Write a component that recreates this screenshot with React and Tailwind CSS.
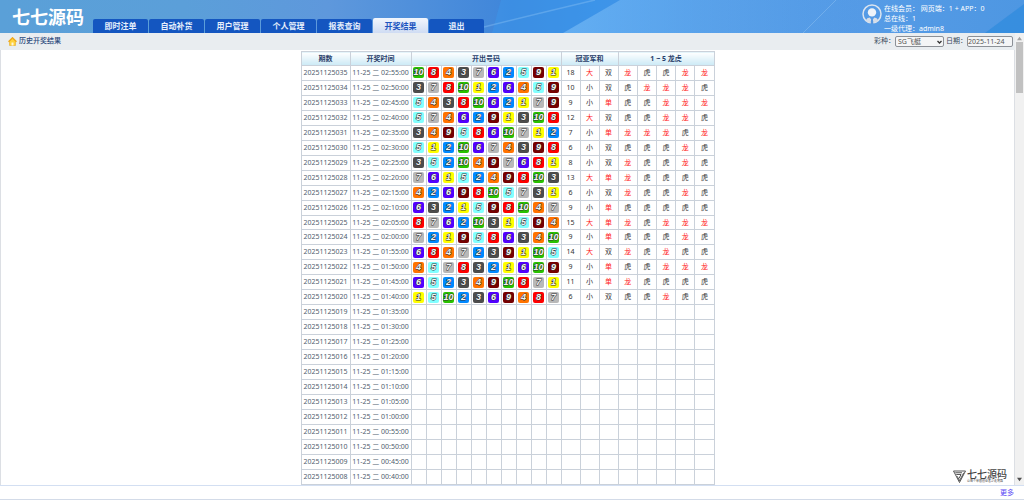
const FONT = "font-['Noto_Sans','Noto_Sans_CJK_SC',sans-serif]";

const TABS = ["即时注单", "自动补货", "用户管理", "个人管理", "报表查询", "开奖结果", "退出"];
const ACTIVE_TAB = "开奖结果";

const BALL_COLORS = {
  1: "bg-[#ffff00]",
  2: "bg-[#0089ff]",
  3: "bg-[#4d4d4d]",
  4: "bg-[#ff7300]",
  5: "bg-[#81ffff]",
  6: "bg-[#5200ff]",
  7: "bg-[#b8b8b8]",
  8: "bg-[#ff0000]",
  9: "bg-[#760000]",
  10: "bg-[#28c200]",
};

// newest draw first
const RESULTS = [
  [10, 8, 4, 3, 7, 6, 2, 5, 9, 1],
  [3, 7, 8, 10, 1, 2, 6, 4, 5, 9],
  [5, 4, 3, 8, 10, 6, 2, 1, 7, 9],
  [5, 7, 4, 6, 2, 9, 1, 3, 10, 8],
  [3, 4, 9, 5, 8, 6, 10, 7, 1, 2],
  [5, 1, 2, 10, 6, 7, 4, 3, 9, 8],
  [3, 5, 2, 10, 4, 9, 7, 6, 8, 1],
  [7, 6, 1, 5, 2, 4, 9, 8, 10, 3],
  [4, 2, 6, 9, 8, 10, 5, 7, 3, 1],
  [6, 3, 2, 1, 5, 9, 8, 10, 4, 7],
  [8, 7, 6, 2, 10, 3, 1, 5, 9, 4],
  [7, 2, 1, 9, 5, 8, 6, 3, 4, 10],
  [6, 8, 4, 7, 2, 3, 9, 1, 10, 5],
  [4, 5, 7, 8, 3, 2, 1, 6, 10, 9],
  [6, 5, 2, 3, 4, 9, 10, 8, 7, 1],
  [1, 5, 10, 2, 3, 6, 9, 4, 8, 7],
];

const pad = (n) => String(n).padStart(2, "0");

// draws run every five minutes, the first one listed is 02:55
const ROWS = Array.from({ length: 28 }, (_, i) => {
  const minutes = 175 - i * 5;
  return {
    id: 20251125035 - i,
    time: `11-25 二 ${pad(Math.floor(minutes / 60))}:${pad(minutes % 60)}:00`,
    balls: RESULTS[i],
  };
});

const Ball = ({ n }) => (
  <span
    className={`mx-auto flex h-[11px] w-[11px] items-center justify-center rounded-xs font-['Liberation_Sans',sans-serif] text-[9px] leading-none font-bold text-[#f4f4f4] italic [-webkit-text-stroke:1px_#333] [paint-order:stroke_fill] ${BALL_COLORS[n]}`}
  >
    {n}
  </span>
);

const Cell = ({ red, children }) => (
  <td className={`border border-[#cad1da] p-0 text-center ${red ? "text-[#ff2222]" : "text-[#333]"}`}>{children}</td>
);

const DrawRow = ({ row }) => {
  const { balls } = row;
  const sum = balls && balls[0] + balls[1];
  return (
    <tr className="h-[14px]">
      <td className="border border-[#cad1da] p-0 text-center">{row.id}</td>
      <td className="border border-[#cad1da] p-0 text-center whitespace-nowrap">{row.time}</td>
      {Array.from({ length: 10 }, (_, i) => (
        <Cell key={i}>{balls && <Ball n={balls[i]} />}</Cell>
      ))}
      <Cell>{sum}</Cell>
      <Cell red={sum > 11}>{balls && (sum > 11 ? "大" : "小")}</Cell>
      <Cell red={sum % 2 === 1}>{balls && (sum % 2 ? "单" : "双")}</Cell>
      {Array.from({ length: 5 }, (_, i) => {
        const dragon = balls && balls[i] > balls[9 - i];
        return (
          <Cell key={i} red={dragon}>
            {balls && (dragon ? "龙" : "虎")}
          </Cell>
        );
      })}
    </tr>
  );
};

const Th = ({ children, ...rest }) => (
  <th
    scope="col"
    className="border border-[#cad1da] bg-gradient-to-b from-white to-[#cbe9f5] p-0 text-center font-bold text-[#2a3f6b]"
    {...rest}
  >
    {children}
  </th>
);

const ResultsTable = () => (
  <table className="h-full w-[414px] table-fixed border-collapse text-[7px] leading-[10px] text-[#4f606e]">
    <colgroup>
      <col className="w-[49px]" />
      <col className="w-[61px]" />
      <col span={10} className="w-[15px]" />
      <col span={3} className="w-[19px]" />
      <col span={5} />
    </colgroup>
    <thead>
      <tr className="h-[14px]">
        <Th>期数</Th>
        <Th>开奖时间</Th>
        <Th colSpan={10}>开出号码</Th>
        <Th colSpan={3}>冠亚军和</Th>
        <Th colSpan={5}>1 ~ 5 龙虎</Th>
      </tr>
    </thead>
    <tbody>
      {ROWS.map((row) => (
        <DrawRow key={row.id} row={row} />
      ))}
    </tbody>
  </table>
);

const HeaderRays = () => (
  <svg className="absolute inset-0 h-full w-full" viewBox="0 0 1024 33" preserveAspectRatio="none" aria-hidden="true">
    <defs>
      <linearGradient id="ray" x1="0" x2="1" y1="0" y2="0">
        <stop offset="0" stopColor="#74bcf8" stopOpacity=".7" />
        <stop offset="1" stopColor="#74bcf8" stopOpacity="0" />
      </linearGradient>
    </defs>
    <path d="M501 0 L492 33 H563 L620 0Z" fill="#3a9cf0" opacity=".4" />
    <path d="M620 0 L563 33 H860 V0Z" fill="url(#ray)" />
    <path d="M484 27 Q540 13 595 0" fill="none" stroke="#8cc4f4" strokeWidth="1.5" opacity=".4" />
    <path d="M803 33 L836 0" fill="none" stroke="#9ccbf5" strokeWidth="1" opacity=".4" />
    <path d="M985 33 L1024 4 V33Z" fill="#1f86dc" opacity=".5" />
  </svg>
);

const UserIcon = () => (
  <svg className="h-5 w-5 shrink-0" viewBox="0 0 20 20" aria-hidden="true">
    <circle cx="10" cy="10" r="9" fill="none" stroke="#dbe4ef" strokeWidth="1.5" />
    <circle cx="10" cy="8.4" r="4.2" fill="#eef3f9" />
    <path d="M3.6 16.4 Q5 13.6 7.6 13.6 L9.2 15.6 L8.6 19 Q5.4 18.6 3.6 16.4Z" fill="#d5dde8" />
    <path d="M16.4 16.4 Q15 13.6 12.4 13.6 L10.8 15.6 L11.4 19 Q14.6 18.6 16.4 16.4Z" fill="#d5dde8" />
    <path d="M9.2 15.6 H10.8 L11.4 20 H8.6Z" fill="#5596e0" />
  </svg>
);

const HomeIcon = () => (
  <svg className="h-[9px] w-[9px]" viewBox="0 0 18 18" aria-hidden="true">
    <path d="M3 8 V17 H15 V8 L9 3Z" fill="#ffd23c" stroke="#e0a010" />
    <path d="M1 9.5 L9 1.5 L17 9.5" fill="none" stroke="#f0a818" strokeWidth="2.6" />
    <path d="M7 17 V11 H11 V17Z" fill="#fff6da" />
  </svg>
);

const Header = () => (
  <header className="relative bg-[linear-gradient(90deg,#5aa0d8_0%,#5b9fd9_18%,#5e98dc_32%,#3f86da_50%,#3f8fe4_58%,#4b93e2_70%,#559be6_85%,#4e97e2_100%)]">
    <HeaderRays />
    <div className="relative flex h-[33px] items-end">
      <h1 className="w-[93px] self-center pl-3 text-[18px] leading-[24px] font-bold whitespace-nowrap text-white">七七源码</h1>
      <nav className="flex items-end gap-px">
        {TABS.map((tab) => (
          <a
            key={tab}
            href="#"
            className={`w-[55px] rounded-t-xs text-center text-[8px] font-bold ${
              tab === ACTIVE_TAB
                ? "bg-gradient-to-b from-[#f2f6fd] to-[#cfdcf3] leading-[15px] text-[#1d55c0]"
                : "bg-[#1456c0] leading-[14px] text-[#e6effc]"
            }`}
          >
            {tab}
          </a>
        ))}
      </nav>
      <div className="ml-auto flex h-full w-[162px] gap-[2px] pt-1 text-[7px] leading-[10px] whitespace-nowrap text-white">
        <UserIcon />
        <div>
          <p>在线会员： 网页端：1 + APP：0</p>
          <p>总在线：1</p>
          <p>一级代理：admin8</p>
        </div>
      </div>
    </div>
  </header>
);

const Toolbar = () => (
  <div className="flex h-[17px] items-center bg-[#e9edf0] pr-[2px] pl-2 text-[7px] text-[#3a4a5c]">
    <HomeIcon />
    <h2 className="ml-[2px] font-medium text-[#2c4a7c]">历史开奖结果</h2>
    <div className="ml-auto flex items-center">
      <label htmlFor="game">彩种：</label>
      <div className="relative mr-[2px] flex">
        <select
          id="game"
          className="h-[11px] w-[49px] appearance-none rounded-xs border border-[#8c9096] bg-[#f4f5f6] py-0 pr-2 pl-[2px] text-[7px] leading-[9px] text-[#555]"
        >
          <option>SG飞艇</option>
        </select>
        <svg className="pointer-events-none absolute top-1 right-[2px] h-[4px] w-[5px]" viewBox="0 0 10 8" aria-hidden="true">
          <path d="M1 2 L5 6 L9 2" fill="none" stroke="#333" strokeWidth="2.6" />
        </svg>
      </div>
      <label htmlFor="date">日期：</label>
      <input
        id="date"
        type="text"
        defaultValue="2025-11-24"
        className="h-[11px] w-[46px] rounded-xs border border-[#8c9096] bg-[#f4f5f6] p-0 text-[7px] leading-[9px] text-[#555]"
      />
    </div>
  </div>
);

const Scrollbar = () => (
  <div className="flex w-[9px] shrink-0 flex-col items-center bg-[#f1f1f1] py-[3px]" aria-hidden="true">
    <svg className="h-[5px] w-[5px]" viewBox="0 0 6 6">
      <path d="M0 5 L3 1 L6 5Z" fill="#a3a3a3" />
    </svg>
    <div className="mt-px h-[51px] w-[7px] bg-[#c1c1c1]" />
    <svg className="mt-auto h-[5px] w-[5px]" viewBox="0 0 6 6">
      <path d="M0 1 L3 5 L6 1Z" fill="#505050" />
    </svg>
  </div>
);

const Watermark = () => (
  <div className="absolute right-[7px] bottom-[2px] flex items-center gap-px text-[#444]">
    <svg className="h-[13px] w-[13px]" viewBox="0 0 26 26" fill="none" stroke="#444" strokeWidth="1.8" aria-hidden="true">
      <path d="M1 2 H25 L13 25Z" />
      <path d="M4.5 5.5 H18 M6.5 9 H16 L12 17" />
      <path d="M21.5 5.5 L13 21.5 L8.5 12.5" />
    </svg>
    <div className="font-['Noto_Sans_CJK_SC',sans-serif] whitespace-nowrap">
      <p className="text-[10px] leading-[10px] font-medium">七七源码</p>
      <p className="text-[3px] leading-[4px]">让每个草根创业者少走弯路</p>
    </div>
  </div>
);

export default function App() {
  return (
    <div className={`flex h-screen flex-col bg-white ${FONT}`}>
      <Header />
      <div className="flex min-h-0 flex-1 border-b border-[#d3dff2]">
        <div className="flex min-w-0 flex-1 flex-col">
          <Toolbar />
          <main className="relative flex min-h-0 flex-1 justify-center overflow-hidden border-x border-[#dcdfe4] pt-px">
            <ResultsTable />
            <Watermark />
          </main>
        </div>
        <Scrollbar />
      </div>
      <footer className="h-[14px] border-b border-[#d3dbe8] pr-[10px] text-right text-[7px] leading-[14px]">
        <a href="#" className="text-[#5a48f5]">
          更多
        </a>
      </footer>
    </div>
  );
}
